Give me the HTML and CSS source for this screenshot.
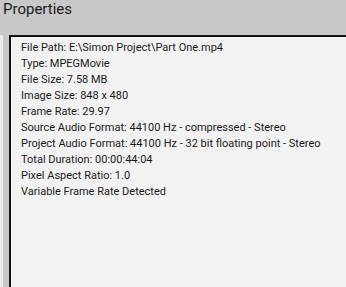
FILE: index.html
```html
<!DOCTYPE html>
<html lang="en">
<head>
  <meta charset="UTF-8" />
  <title>Properties</title>
  <link rel="stylesheet" href="styles.css">
</head>
<body>
  <div class="header">Properties</div>
  <div class="main">
    <div class="edge"></div>
    <div class="panel">
      <div>File Path: E:\Simon Project\Part One.mp4</div>
      <div>Type: MPEGMovie</div>
      <div>File Size: 7.58 MB</div>
      <div>Image Size: 848 x 480</div>
      <div>Frame Rate: 29.97</div>
      <div>Source Audio Format: 44100 Hz - compressed - Stereo</div>
      <div>Project Audio Format: 44100 Hz - 32 bit floating point - Stereo</div>
      <div>Total Duration: 00:00:44:04</div>
      <div>Pixel Aspect Ratio: 1.0</div>
      <div>Variable Frame Rate Detected</div>
    </div>
  </div>
</body>
</html>
```
FILE: styles.css
```css
html, body {
  margin: 0;
  height: 100%;
  overflow: hidden;
}
body {
  background: #c8c8c8;
  font-family: 'Roboto', sans-serif;
  color: #1a1a1a;
}
.header {
  height: 35px;
  padding-left: 3px;
  font-size: 15px;
  line-height: 19px;
}
.main {
  display: flex;
  height: 252px;
}
.edge {
  flex-shrink: 0;
  width: 3px;
  background: #ececec;
  margin-right: 6px;
}
.panel {
  flex: 1;
  min-width: 0;
  overflow: hidden;
  background: #f2f2f2;
  border-left: 2px solid #111;
  border-top: 2px solid #111;
  padding: 3px 0 0 10px;
  font-size: 11px;
  line-height: 16px;
  white-space: nowrap;
}
```
